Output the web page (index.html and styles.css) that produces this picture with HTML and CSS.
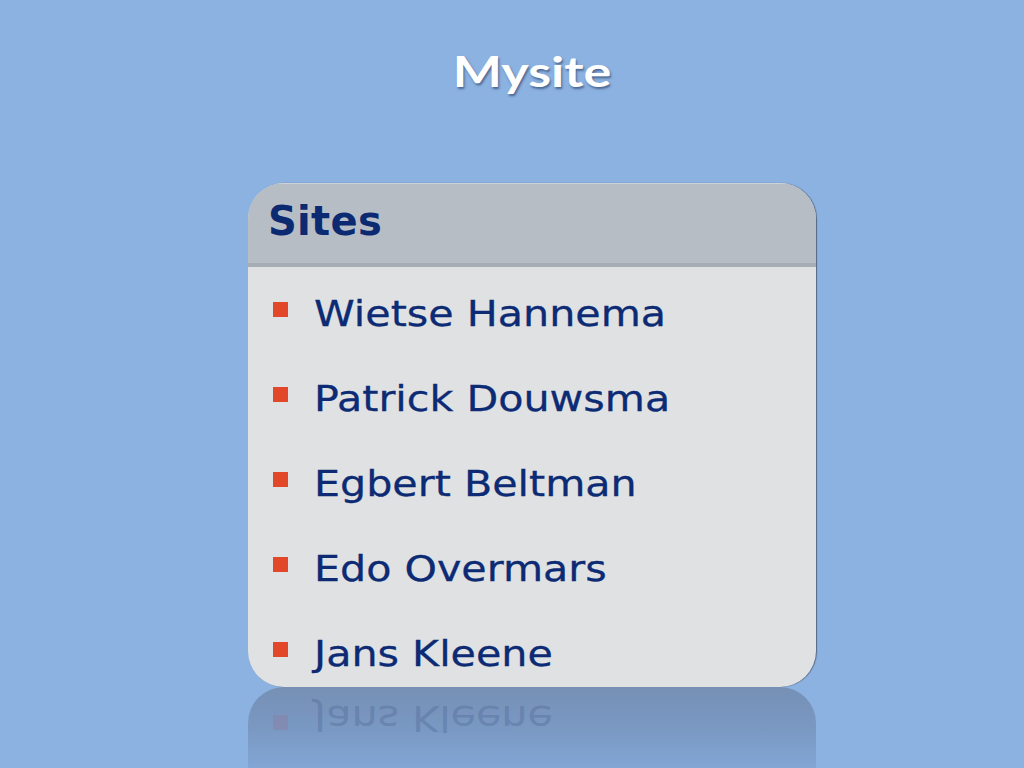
FILE: index.html
```html
<!DOCTYPE html>
<html lang="nl">
<head>
<meta charset="utf-8">
<title>Mysite</title>
<link rel="stylesheet" href="styles.css">
</head>
<body>
<div class="page">
  <h1 class="title"><span class="stretch">Mysite</span></h1>
  <div class="card">
    <div class="card-head"><span class="head-text">Sites</span></div>
    <ul class="sites">
      <li class="site"><span class="bullet"></span><span class="name">Wietse Hannema</span></li>
      <li class="site"><span class="bullet"></span><span class="name">Patrick Douwsma</span></li>
      <li class="site"><span class="bullet"></span><span class="name">Egbert Beltman</span></li>
      <li class="site"><span class="bullet"></span><span class="name">Edo Overmars</span></li>
      <li class="site"><span class="bullet"></span><span class="name">Jans Kleene</span></li>
    </ul>
  </div>
  <div class="reflection" aria-hidden="true">
    <div class="reflect-row"><span class="bullet"></span><span class="name">Jans Kleene</span></div>
  </div>
</div>
</body>
</html>
```

FILE: styles.css
```css
html, body {
  margin: 0;
  padding: 0;
}

body {
  background: #8cb2e1;
  width: 1024px;
  height: 768px;
  overflow: hidden;
}

.page {
  display: flex;
  flex-direction: column;
  align-items: center;
  padding-left: 40px;
  height: 768px;
  box-sizing: border-box;
}

.title {
  margin: 41px 0 0 0;
  height: 142px;
  font-family: "Lato", "Open Sans", sans-serif;
  font-weight: 700;
  font-size: 42px;
  line-height: 60px;
  color: #ffffff;
  text-shadow: 1px 2px 2px rgba(20, 40, 80, 0.55);
}

.stretch {
  display: inline-block;
  transform: scaleX(1.24);
}

.card {
  width: 568px;
  height: 504px;
  border-radius: 36px;
  overflow: hidden;
  background: #e0e1e3;
  box-shadow: 1px 0 1px rgba(40, 40, 50, 0.55);
  flex: none;
}

.card-head {
  height: 75px;
  padding: 0 0 4px 20px;
  background: #b7bdc5;
  border-top: 1px solid #cdd2d8;
  border-bottom: 4px solid #a7adb5;
  box-sizing: content-box;
  font-family: "DejaVu Sans", Verdana, sans-serif;
  font-weight: 700;
  font-size: 40px;
  line-height: 75px;
  color: #0b2a72;
  letter-spacing: 0.3px;
}

.sites {
  list-style: none;
  margin: 0;
  padding: 4px 0 0 25px;
}

.site {
  display: flex;
  align-items: center;
  height: 85px;
}

.bullet {
  flex: none;
  width: 15px;
  height: 15px;
  background: #e2472a;
  margin-bottom: 9px;
}

.name {
  display: inline-block;
  margin-left: 26px;
  font-family: "DejaVu Sans", Verdana, sans-serif;
  font-size: 36px;
  line-height: 1;
  color: #0c2b74;
  transform: scaleX(1.145);
  transform-origin: left center;
  white-space: nowrap;
  -webkit-text-stroke: 0.3px #0c2b74;
}

.reflection {
  width: 568px;
  height: 81px;
  flex: none;
  border-radius: 36px 36px 0 0;
  background: linear-gradient(to bottom, #7690b5 0%, #7a98c2 50%, #82a6d5 100%);
  overflow: hidden;
  box-sizing: border-box;
  padding-left: 25px;
}

.reflect-row {
  display: flex;
  align-items: center;
  height: 85px;
  margin-top: -11px;
  transform: scaleY(-1);
  opacity: 0.25;
}

.reflect-row .bullet {
  background: #9a6a88;
}

.reflect-row .name {
  color: #3a5080;
  -webkit-text-stroke: 0;
}
```
